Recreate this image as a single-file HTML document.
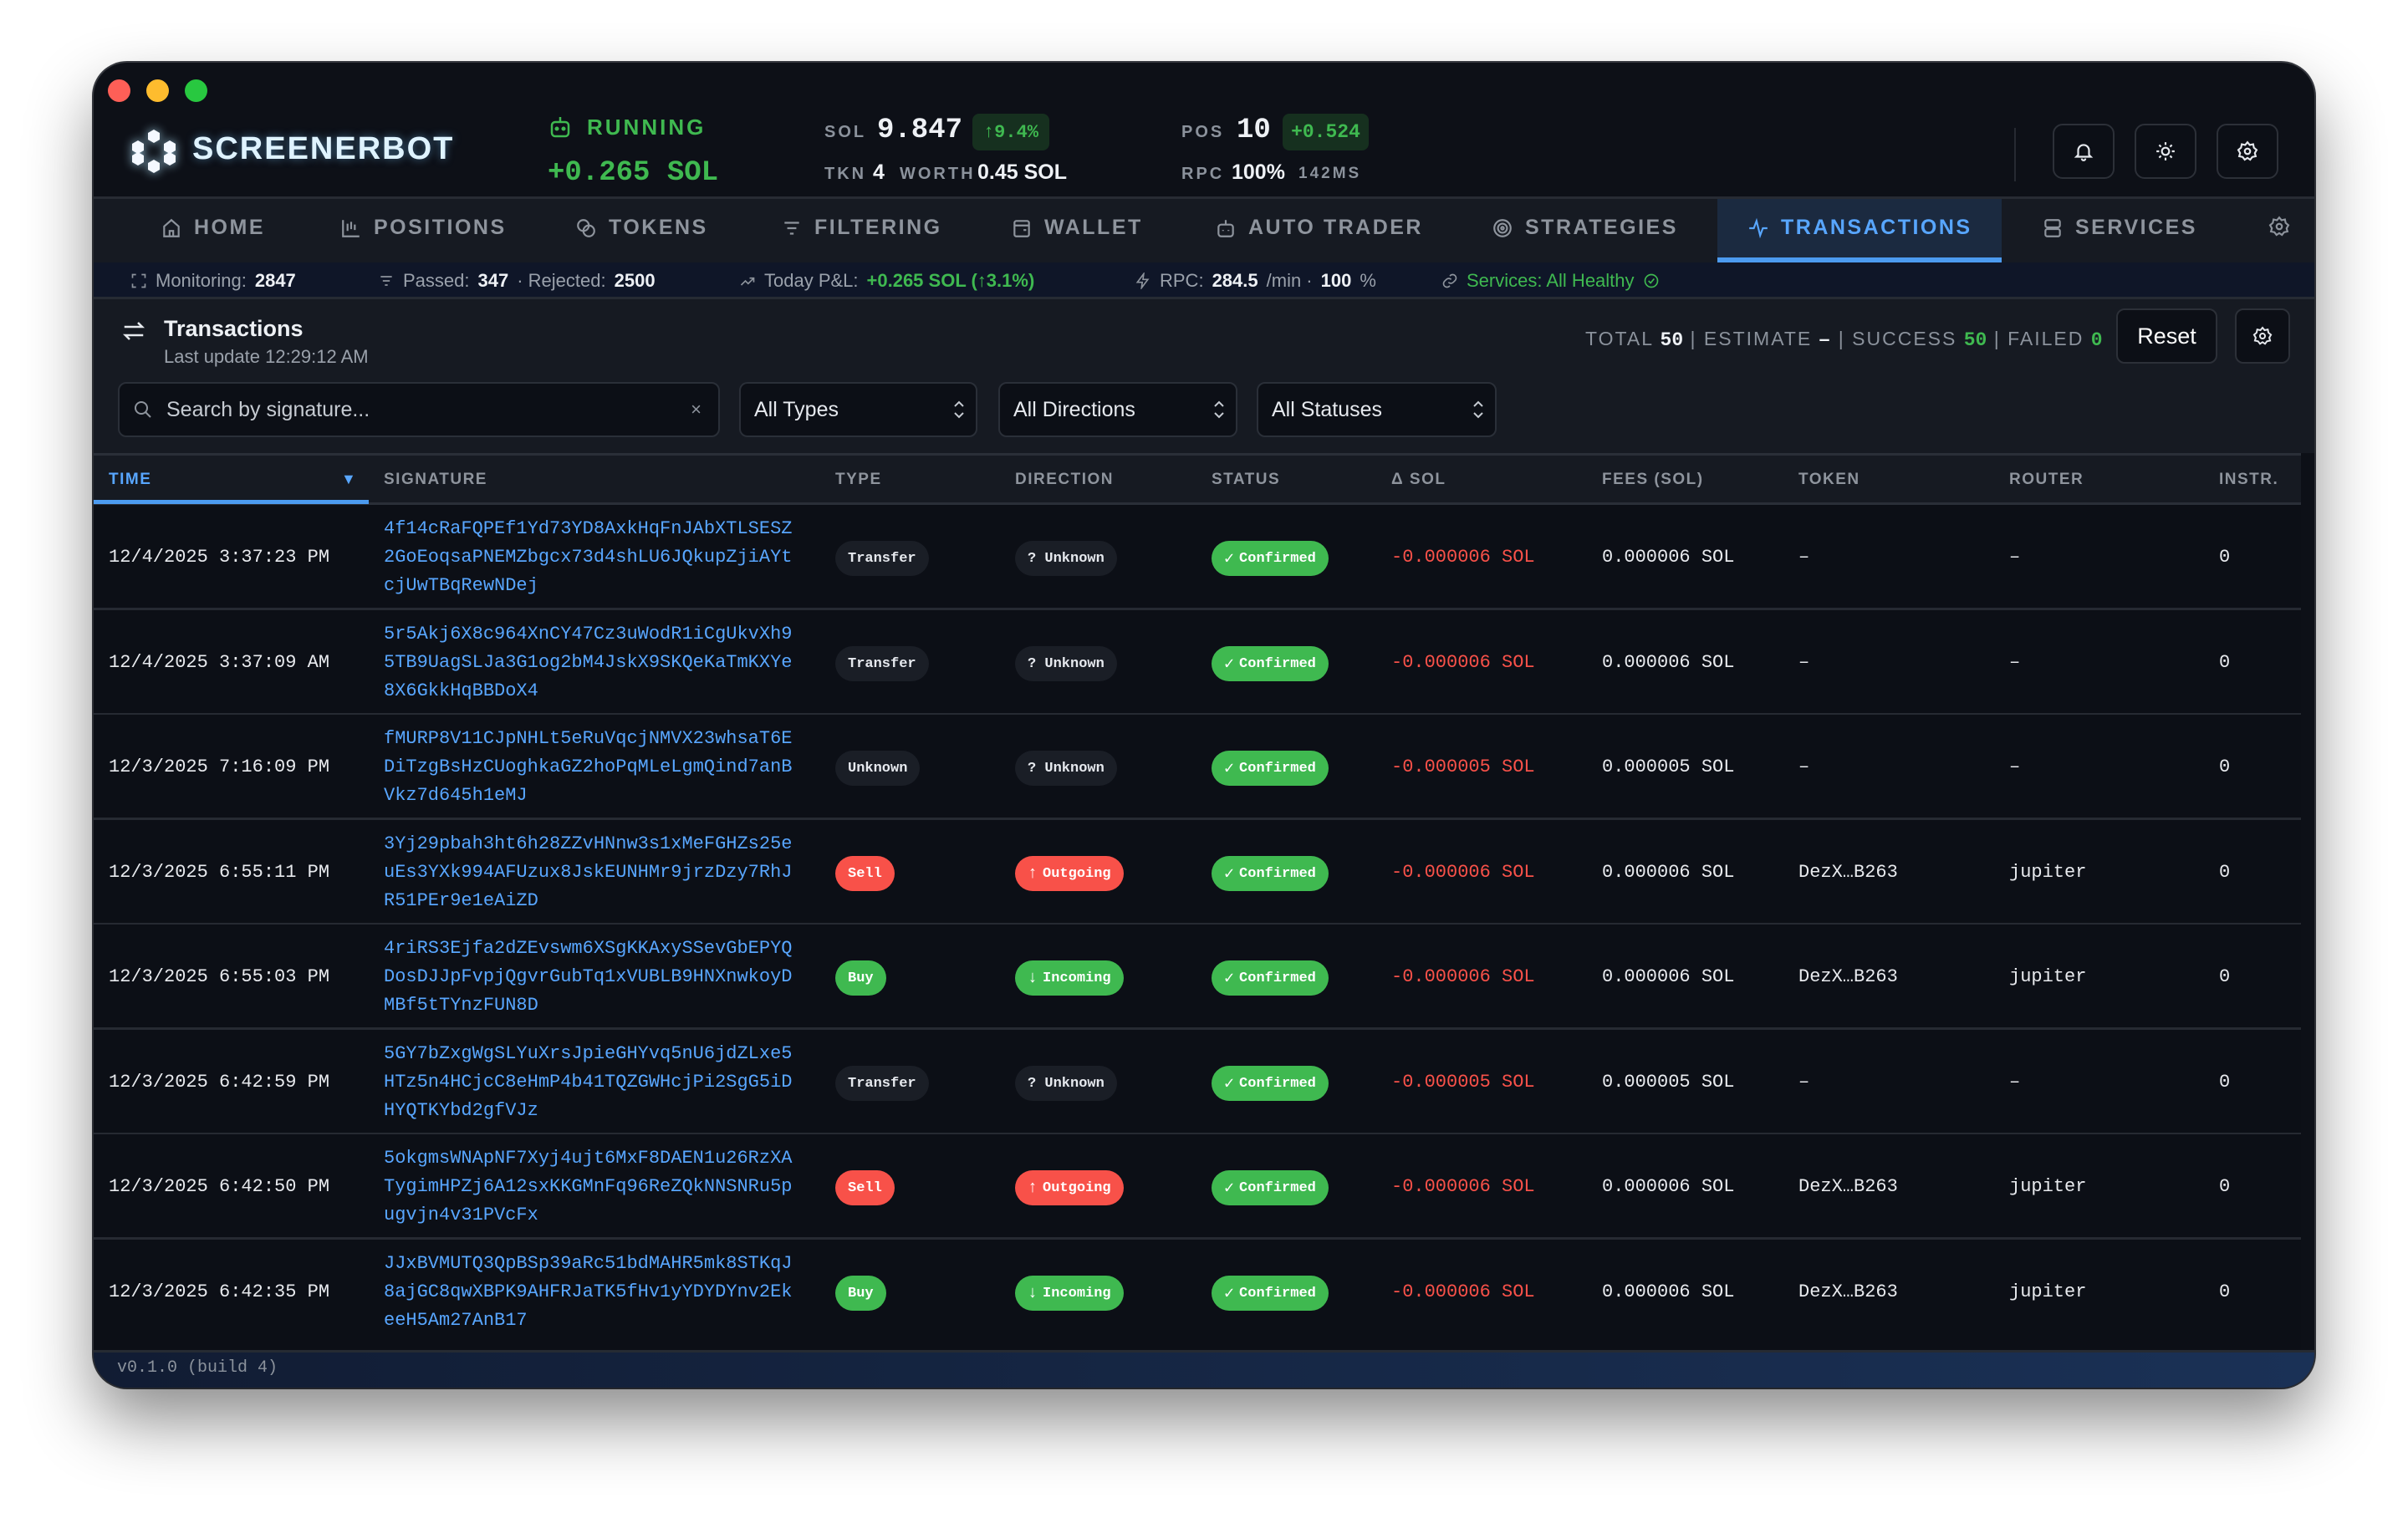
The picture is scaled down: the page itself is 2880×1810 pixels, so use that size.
<!DOCTYPE html>
<html><head><meta charset="utf-8">
<style>
*{box-sizing:border-box;margin:0;padding:0}
html,body{width:2880px;height:1810px;background:#fff;overflow:hidden;font-family:"Liberation Sans",sans-serif}
.win{position:absolute;left:112px;top:75px;width:2656px;height:1585px;border-radius:40px;background:#0d1017;overflow:hidden;box-shadow:0 40px 80px rgba(0,0,0,.45),0 0 0 2px #3a3d44}
.abs{position:absolute;white-space:nowrap}
.dot{position:absolute;top:20px;width:27px;height:27px;border-radius:50%}
.mono{font-family:"Liberation Mono",monospace}
.lbl{color:#8b929c;font-size:20px;letter-spacing:3px;font-weight:bold}
.nav{position:absolute;left:0;top:160px;width:2656px;height:79px;background:#161a22;border-top:3px solid #272b33}
.nv{position:absolute;top:20px;font-size:25px;font-weight:bold;letter-spacing:2.5px;color:#8e949d;display:flex;align-items:center;gap:14px}
.nv svg{width:26px;height:26px;stroke:#8e949d;fill:none;stroke-width:2}
.sb{position:absolute;left:0;top:239px;width:2656px;height:44px;background:#0f1628;border-bottom:3px solid #262b33;font-size:22px;color:#9aa1ab}
.sb .it{position:absolute;top:9px;display:flex;align-items:center;gap:10px}
.sb b{color:#eef1f5}
.sb svg{width:20px;height:20px;stroke:#8e949d;fill:none;stroke-width:2}
.panel{position:absolute;left:0;top:283px;width:2656px;height:184px;background:#161a22}
.inp{position:absolute;top:99px;height:66px;border:2px solid #2a2f38;border-radius:10px;background:#0c0f16;color:#e6e9ee;font-size:25px;padding:0 0 0 16px;display:flex;align-items:center}
.thead{position:absolute;left:0;top:467px;width:2640px;height:62px;background:#161a22;border-top:3px solid #2a2f38;border-bottom:3px solid #2a2f38}
.th{position:absolute;top:18px;font-size:19px;font-weight:bold;letter-spacing:1.5px;color:#8e949d}
.row{position:absolute;left:0;width:2640px;height:125.6px;border-bottom:3px solid #262a32;background:#0c0f16}
.c{position:absolute;font-family:"Liberation Mono",monospace;font-size:22px;color:#e8eaee}
.sig{color:#58a6ff;line-height:34px;top:12px}
.mid{top:50px}
.pill{position:absolute;top:43px;height:42px;border-radius:21px;font-family:"Liberation Mono",monospace;font-weight:bold;font-size:17px;color:#fff;display:flex;align-items:center;justify-content:center;padding:0 15px}
.pill i{font-style:normal;font-size:20px;margin-right:6px}
.g{background:#3fb950}.r{background:#f85149}.d{background:#1a1e26;color:#e6e9ee}
.red{color:#f85149}
.hbtn{position:absolute;top:73px;width:74px;height:66px;border:2px solid #2c3038;border-radius:12px;background:#0c0f16;display:flex;align-items:center;justify-content:center}
.hbtn svg{width:26px;height:26px;stroke:#e6e9ee;fill:none;stroke-width:2}
</style></head><body>
<div class="win">
  <div class="dot" style="left:17px;background:#fe5f57"></div>
  <div class="dot" style="left:63px;background:#febc2e"></div>
  <div class="dot" style="left:109px;background:#28c840"></div>

  <svg class="abs" style="left:44px;top:78px;filter:drop-shadow(0 0 6px rgba(180,230,255,.8))" width="56" height="56" viewBox="-28 -28 56 56">
    <g fill="#f4f8ff">
      <polygon points="0,-26 7,-22 7,-14 0,-10 -7,-14 -7,-22"/>
      <polygon points="0,26 7,22 7,14 0,10 -7,14 -7,22"/>
      <polygon points="-19,-16 -12,-12 -12,-4 -19,0 -26,-4 -26,-12" transform="translate(0,3)"/>
      <polygon points="19,-16 26,-12 26,-4 19,0 12,-4 12,-12" transform="translate(0,3)"/>
      <polygon points="-19,0 -12,4 -12,12 -19,16 -26,12 -26,4" transform="translate(0,1)"/>
      <polygon points="19,0 26,4 26,12 19,16 12,12 12,4" transform="translate(0,1)"/>
    </g>
  </svg>
  <div class="abs" style="left:118px;top:82px;font-size:38px;font-weight:bold;letter-spacing:2px;color:#dff3ff;text-shadow:0 0 10px rgba(120,200,255,.5)">SCREENERBOT</div>

  <svg class="abs" style="left:545px;top:63px" width="26" height="28" viewBox="0 0 26 28" fill="none" stroke="#3fb950" stroke-width="2.5"><rect x="3" y="8" width="20" height="17" rx="4"/><line x1="13" y1="2" x2="13" y2="8"/><circle cx="9" cy="16" r="1.3" fill="#3fb950"/><circle cx="17" cy="16" r="1.3" fill="#3fb950"/></svg>
  <div class="abs" style="left:590px;top:62px;font-size:26px;font-weight:bold;letter-spacing:3px;color:#3fb950">RUNNING</div>
  <div class="abs mono" style="left:543px;top:113px;font-size:34px;font-weight:bold;color:#3fb950">+0.265 SOL</div>

  <div class="abs lbl" style="left:874px;top:72px">SOL</div>
  <div class="abs mono" style="left:937px;top:62px;font-size:34px;font-weight:bold;color:#eef1f5">9.847</div>
  <div class="abs mono" style="left:1051px;top:61px;width:92px;height:44px;background:#16301f;border-radius:8px;color:#3fb950;font-size:22px;font-weight:bold;display:flex;align-items:center;justify-content:center">↑9.4%</div>
  <div class="abs lbl" style="left:874px;top:122px">TKN</div>
  <div class="abs" style="left:932px;top:117px;font-size:25px;font-weight:bold;color:#eef1f5">4</div>
  <div class="abs lbl" style="left:964px;top:122px">WORTH</div>
  <div class="abs" style="left:1057px;top:117px;font-size:25px;font-weight:bold;color:#eef1f5">0.45 SOL</div>

  <div class="abs lbl" style="left:1301px;top:72px">POS</div>
  <div class="abs mono" style="left:1367px;top:62px;font-size:34px;font-weight:bold;color:#eef1f5">10</div>
  <div class="abs mono" style="left:1422px;top:61px;width:103px;height:44px;background:#16301f;border-radius:8px;color:#3fb950;font-size:23px;font-weight:bold;display:flex;align-items:center;justify-content:center">+0.524</div>
  <div class="abs lbl" style="left:1301px;top:122px">RPC</div>
  <div class="abs" style="left:1361px;top:117px;font-size:25px;font-weight:bold;color:#eef1f5">100%</div>
  <div class="abs lbl" style="left:1441px;top:122px;font-size:19px">142MS</div>

  <div class="abs" style="left:2297px;top:78px;width:2px;height:64px;background:#262a32"></div>
  <div class="hbtn" style="left:2343px"><svg viewBox="0 0 24 24"><path d="M6 16V11a6 6 0 0 1 12 0v5l2 2H4z"/><path d="M10 20a2 2 0 0 0 4 0"/></svg></div>
  <div class="hbtn" style="left:2441px"><svg viewBox="0 0 24 24"><circle cx="12" cy="12" r="4"/><path d="M12 2v3M12 19v3M2 12h3M19 12h3M5 5l2 2M17 17l2 2M5 19l2-2M17 7l2-2"/></svg></div>
  <div class="hbtn" style="left:2539px"><svg viewBox="0 0 24 24"><circle cx="12" cy="12" r="3"/><path d="M12 2l2.5 3 3.8-.8.8 3.8 3 2.5-2 3.5 1 3.5-3.8.8-2.3 3-3-2-3 2-2.3-3-3.8-.8 1-3.5-2-3.5 3-2.5.8-3.8 3.8.8z"/></svg></div>

  <div class="nav">
    <div class="nv" style="left:80px"><svg viewBox="0 0 24 24"><path d="M4 21V10l8-7 8 7v11H4z"/><path d="M10 21v-6h4v6"/></svg>HOME</div>
    <div class="nv" style="left:295px"><svg viewBox="0 0 24 24"><path d="M3 3v18h18"/><path d="M8 7v8M12 5v8M16 8v6"/></svg>POSITIONS</div>
    <div class="nv" style="left:576px"><svg viewBox="0 0 24 24"><circle cx="9" cy="9" r="6"/><circle cx="15" cy="15" r="6"/></svg>TOKENS</div>
    <div class="nv" style="left:822px"><svg viewBox="0 0 24 24"><path d="M4 6h16M7 12h10M10 18h4"/></svg>FILTERING</div>
    <div class="nv" style="left:1097px"><svg viewBox="0 0 24 24"><rect x="4" y="4" width="16" height="17" rx="2"/><path d="M4 9h16M14 14h3"/></svg>WALLET</div>
    <div class="nv" style="left:1341px"><svg viewBox="0 0 24 24"><rect x="4" y="8" width="16" height="13" rx="3"/><path d="M12 3v5M9 14v1M15 14v1"/></svg>AUTO TRADER</div>
    <div class="nv" style="left:1672px"><svg viewBox="0 0 24 24"><circle cx="12" cy="12" r="9"/><circle cx="12" cy="12" r="5"/><circle cx="12" cy="12" r="1.5"/></svg>STRATEGIES</div>
    <div style="position:absolute;left:1942px;top:0;width:340px;height:76px;background:#1b2a40;border-bottom:6px solid #4c9bf0"></div>
    <div class="nv" style="left:1978px;color:#58a6ff"><svg viewBox="0 0 24 24" style="stroke:#58a6ff"><path d="M2 12h5l3-8 4 16 3-8h5"/></svg>TRANSACTIONS</div>
    <div class="nv" style="left:2330px"><svg viewBox="0 0 24 24"><rect x="4" y="3" width="16" height="8" rx="2"/><rect x="4" y="13" width="16" height="8" rx="2"/></svg>SERVICES</div>
    <div class="nv" style="left:2601px"><svg viewBox="0 0 24 24"><circle cx="12" cy="12" r="3"/><path d="M12 2l2.5 3 3.8-.8.8 3.8 3 2.5-2 3.5 1 3.5-3.8.8-2.3 3-3-2-3 2-2.3-3-3.8-.8 1-3.5-2-3.5 3-2.5.8-3.8 3.8.8z"/></svg></div>
  </div>

  <div class="sb">
    <div class="it" style="left:44px"><svg viewBox="0 0 24 24"><path d="M3 8V3h5M16 3h5v5M21 16v5h-5M8 21H3v-5"/></svg>Monitoring: <b>2847</b></div>
    <div class="it" style="left:340px"><svg viewBox="0 0 24 24"><path d="M4 6h16M7 12h10M10 18h4"/></svg>Passed: <b>347</b> · Rejected: <b>2500</b></div>
    <div class="it" style="left:772px"><svg viewBox="0 0 24 24"><path d="M3 18l6-6 4 4 8-8M15 8h6v6"/></svg>Today P&amp;L: <b style="color:#3fb950">+0.265 SOL (↑3.1%)</b></div>
    <div class="it" style="left:1245px"><svg viewBox="0 0 24 24"><path d="M13 2L4 14h7l-1 8 9-12h-7z"/></svg>RPC: <b>284.5</b>/min · <b>100</b>%</div>
    <div class="it" style="left:1612px;color:#3fb950"><svg viewBox="0 0 24 24"><path d="M10 14a5 5 0 0 0 7 0l3-3a5 5 0 0 0-7-7l-1 1M14 10a5 5 0 0 0-7 0l-3 3a5 5 0 0 0 7 7l1-1"/></svg>Services: All Healthy <svg viewBox="0 0 24 24" style="stroke:#3fb950"><circle cx="12" cy="12" r="9"/><path d="M8 12l3 3 5-6"/></svg></div>
  </div>

  <div class="panel">
    <svg class="abs" style="left:33px;top:23px" width="30" height="30" viewBox="0 0 24 24" fill="none" stroke="#e6e9ee" stroke-width="2"><path d="M3 8h17l-4-4M21 16H4l4 4"/></svg>
    <div class="abs" style="left:84px;top:20px;font-size:27px;font-weight:bold;color:#eef1f5">Transactions</div>
    <div class="abs" style="left:84px;top:56px;font-size:22px;color:#9aa1ab">Last update 12:29:12 AM</div>

    <div class="abs" style="left:1784px;top:34px;font-size:23px;letter-spacing:2px;color:#8b929c">TOTAL <b class="mono" style="color:#eef1f5;letter-spacing:0">50</b> | ESTIMATE <b style="color:#eef1f5">–</b> | SUCCESS <b class="mono" style="color:#3fb950;letter-spacing:0">50</b> | FAILED <b class="mono" style="color:#3fb950;letter-spacing:0">0</b></div>
    <div class="abs" style="left:2419px;top:11px;width:121px;height:66px;border:2px solid #2c3038;border-radius:10px;background:#0c0f16;color:#fff;font-size:27px;display:flex;align-items:center;justify-content:center">Reset</div>
    <div class="abs" style="left:2561px;top:11px;width:66px;height:66px;border:2px solid #2c3038;border-radius:10px;background:#0c0f16;display:flex;align-items:center;justify-content:center"><svg width="24" height="24" viewBox="0 0 24 24" fill="none" stroke="#e6e9ee" stroke-width="2"><circle cx="12" cy="12" r="3"/><path d="M12 2l2.5 3 3.8-.8.8 3.8 3 2.5-2 3.5 1 3.5-3.8.8-2.3 3-3-2-3 2-2.3-3-3.8-.8 1-3.5-2-3.5 3-2.5.8-3.8 3.8.8z"/></svg></div>

    <div class="inp" style="left:29px;width:720px;color:#c6cbd2"><svg width="24" height="24" viewBox="0 0 24 24" fill="none" stroke="#8e949d" stroke-width="2" style="margin-right:16px"><circle cx="10" cy="10" r="7"/><path d="M15 15l6 6"/></svg>Search by signature...<span style="position:absolute;right:20px;color:#8e949d;font-size:22px">×</span></div>
    <div class="inp" style="left:772px;width:285px">All Types<svg style="position:absolute;right:12px" width="16" height="26" viewBox="0 0 16 26" fill="none" stroke="#c6cbd2" stroke-width="2"><path d="M3 9l5-5 5 5M3 17l5 5 5-5"/></svg></div>
    <div class="inp" style="left:1082px;width:286px">All Directions<svg style="position:absolute;right:12px" width="16" height="26" viewBox="0 0 16 26" fill="none" stroke="#c6cbd2" stroke-width="2"><path d="M3 9l5-5 5 5M3 17l5 5 5-5"/></svg></div>
    <div class="inp" style="left:1391px;width:287px">All Statuses<svg style="position:absolute;right:12px" width="16" height="26" viewBox="0 0 16 26" fill="none" stroke="#c6cbd2" stroke-width="2"><path d="M3 9l5-5 5 5M3 17l5 5 5-5"/></svg></div>
  </div>

  <div class="thead">
    <div class="th" style="left:18px;color:#58a6ff">TIME</div>
    <div class="th" style="left:296px;color:#58a6ff;font-size:18px">▼</div>
    <div style="position:absolute;left:0;top:53px;width:329px;height:5px;background:#4c9bf0"></div>
    <div class="th" style="left:347px">SIGNATURE</div>
    <div class="th" style="left:887px">TYPE</div>
    <div class="th" style="left:1102px">DIRECTION</div>
    <div class="th" style="left:1337px">STATUS</div>
    <div class="th" style="left:1552px">Δ SOL</div>
    <div class="th" style="left:1804px">FEES (SOL)</div>
    <div class="th" style="left:2039px">TOKEN</div>
    <div class="th" style="left:2291px">ROUTER</div>
    <div class="th" style="left:2542px">INSTR.</div>
  </div>

  <div class="row" style="top:529px">
    <div class="c mid" style="left:18px">12/4/2025 3:37:23 PM</div>
    <div class="c sig" style="left:347px">4f14cRaFQPEf1Yd73YD8AxkHqFnJAbXTLSESZ<br>2GoEoqsaPNEMZbgcx73d4shLU6JQkupZjiAYt<br>cjUwTBqRewNDej</div>
    <div class="pill d" style="left:887px">Transfer</div>
    <div class="pill d" style="left:1102px">? Unknown</div>
    <div class="pill g" style="left:1337px"><i>✓</i>Confirmed</div>
    <div class="c mid red" style="left:1552px">-0.000006 SOL</div>
    <div class="c mid" style="left:1804px">0.000006 SOL</div>
    <div class="c mid" style="left:2039px">–</div><div class="c mid" style="left:2291px">–</div><div class="c mid" style="left:2542px">0</div>
  </div>
  <div class="row" style="top:655px">
    <div class="c mid" style="left:18px">12/4/2025 3:37:09 AM</div>
    <div class="c sig" style="left:347px">5r5Akj6X8c964XnCY47Cz3uWodR1iCgUkvXh9<br>5TB9UagSLJa3G1og2bM4JskX9SKQeKaTmKXYe<br>8X6GkkHqBBDoX4</div>
    <div class="pill d" style="left:887px">Transfer</div>
    <div class="pill d" style="left:1102px">? Unknown</div>
    <div class="pill g" style="left:1337px"><i>✓</i>Confirmed</div>
    <div class="c mid red" style="left:1552px">-0.000006 SOL</div>
    <div class="c mid" style="left:1804px">0.000006 SOL</div>
    <div class="c mid" style="left:2039px">–</div><div class="c mid" style="left:2291px">–</div><div class="c mid" style="left:2542px">0</div>
  </div>
  <div class="row" style="top:780px">
    <div class="c mid" style="left:18px">12/3/2025 7:16:09 PM</div>
    <div class="c sig" style="left:347px">fMURP8V11CJpNHLt5eRuVqcjNMVX23whsaT6E<br>DiTzgBsHzCUoghkaGZ2hoPqMLeLgmQind7anB<br>Vkz7d645h1eMJ</div>
    <div class="pill d" style="left:887px">Unknown</div>
    <div class="pill d" style="left:1102px">? Unknown</div>
    <div class="pill g" style="left:1337px"><i>✓</i>Confirmed</div>
    <div class="c mid red" style="left:1552px">-0.000005 SOL</div>
    <div class="c mid" style="left:1804px">0.000005 SOL</div>
    <div class="c mid" style="left:2039px">–</div><div class="c mid" style="left:2291px">–</div><div class="c mid" style="left:2542px">0</div>
  </div>
  <div class="row" style="top:906px">
    <div class="c mid" style="left:18px">12/3/2025 6:55:11 PM</div>
    <div class="c sig" style="left:347px">3Yj29pbah3ht6h28ZZvHNnw3s1xMeFGHZs25e<br>uEs3YXk994AFUzux8JskEUNHMr9jrzDzy7RhJ<br>R51PEr9e1eAiZD</div>
    <div class="pill r" style="left:887px">Sell</div>
    <div class="pill r" style="left:1102px"><i>↑</i>Outgoing</div>
    <div class="pill g" style="left:1337px"><i>✓</i>Confirmed</div>
    <div class="c mid red" style="left:1552px">-0.000006 SOL</div>
    <div class="c mid" style="left:1804px">0.000006 SOL</div>
    <div class="c mid" style="left:2039px">DezX…B263</div><div class="c mid" style="left:2291px">jupiter</div><div class="c mid" style="left:2542px">0</div>
  </div>
  <div class="row" style="top:1031px">
    <div class="c mid" style="left:18px">12/3/2025 6:55:03 PM</div>
    <div class="c sig" style="left:347px">4riRS3Ejfa2dZEvswm6XSgKKAxySSevGbEPYQ<br>DosDJJpFvpjQgvrGubTq1xVUBLB9HNXnwkoyD<br>MBf5tTYnzFUN8D</div>
    <div class="pill g" style="left:887px">Buy</div>
    <div class="pill g" style="left:1102px"><i>↓</i>Incoming</div>
    <div class="pill g" style="left:1337px"><i>✓</i>Confirmed</div>
    <div class="c mid red" style="left:1552px">-0.000006 SOL</div>
    <div class="c mid" style="left:1804px">0.000006 SOL</div>
    <div class="c mid" style="left:2039px">DezX…B263</div><div class="c mid" style="left:2291px">jupiter</div><div class="c mid" style="left:2542px">0</div>
  </div>
  <div class="row" style="top:1157px">
    <div class="c mid" style="left:18px">12/3/2025 6:42:59 PM</div>
    <div class="c sig" style="left:347px">5GY7bZxgWgSLYuXrsJpieGHYvq5nU6jdZLxe5<br>HTz5n4HCjcC8eHmP4b41TQZGWHcjPi2SgG5iD<br>HYQTKYbd2gfVJz</div>
    <div class="pill d" style="left:887px">Transfer</div>
    <div class="pill d" style="left:1102px">? Unknown</div>
    <div class="pill g" style="left:1337px"><i>✓</i>Confirmed</div>
    <div class="c mid red" style="left:1552px">-0.000005 SOL</div>
    <div class="c mid" style="left:1804px">0.000005 SOL</div>
    <div class="c mid" style="left:2039px">–</div><div class="c mid" style="left:2291px">–</div><div class="c mid" style="left:2542px">0</div>
  </div>
  <div class="row" style="top:1282px">
    <div class="c mid" style="left:18px">12/3/2025 6:42:50 PM</div>
    <div class="c sig" style="left:347px">5okgmsWNApNF7Xyj4ujt6MxF8DAEN1u26RzXA<br>TygimHPZj6A12sxKKGMnFq96ReZQkNNSNRu5p<br>ugvjn4v31PVcFx</div>
    <div class="pill r" style="left:887px">Sell</div>
    <div class="pill r" style="left:1102px"><i>↑</i>Outgoing</div>
    <div class="pill g" style="left:1337px"><i>✓</i>Confirmed</div>
    <div class="c mid red" style="left:1552px">-0.000006 SOL</div>
    <div class="c mid" style="left:1804px">0.000006 SOL</div>
    <div class="c mid" style="left:2039px">DezX…B263</div><div class="c mid" style="left:2291px">jupiter</div><div class="c mid" style="left:2542px">0</div>
  </div>
  <div class="row" style="top:1408px;border-bottom:none;height:135px">
    <div class="c mid" style="left:18px">12/3/2025 6:42:35 PM</div>
    <div class="c sig" style="left:347px">JJxBVMUTQ3QpBSp39aRc51bdMAHR5mk8STKqJ<br>8ajGC8qwXBPK9AHFRJaTK5fHv1yYDYDYnv2Ek<br>eeH5Am27AnB17</div>
    <div class="pill g" style="left:887px">Buy</div>
    <div class="pill g" style="left:1102px"><i>↓</i>Incoming</div>
    <div class="pill g" style="left:1337px"><i>✓</i>Confirmed</div>
    <div class="c mid red" style="left:1552px">-0.000006 SOL</div>
    <div class="c mid" style="left:1804px">0.000006 SOL</div>
    <div class="c mid" style="left:2039px">DezX…B263</div><div class="c mid" style="left:2291px">jupiter</div><div class="c mid" style="left:2542px">0</div>
  </div>

  <div class="abs" style="left:0;top:1540px;width:2656px;height:45px;background:linear-gradient(90deg,#111c33,#1a3156);border-top:3px solid #262b33"></div>
  <div class="abs mono" style="left:28px;top:1550px;font-size:20px;color:#8b929c">v0.1.0 (build 4)</div>
</div>
</body></html>
